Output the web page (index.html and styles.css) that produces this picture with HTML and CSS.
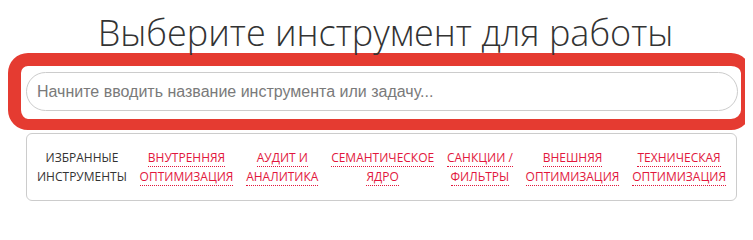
FILE: index.html
```html
<!DOCTYPE html>
<html lang="ru">
<head>
<meta charset="utf-8">
<link rel="stylesheet" href="styles.css">
</head>
<body>
<div class="page">
  <h1 class="title">Выберите инструмент для работы</h1>
  <div class="highlight">
    <div class="search"><span class="placeholder">Начните вводить название инструмента или задачу...</span></div>
  </div>
  <div class="tabs">
    <div class="tab tab-fav">Избранные<br>инструменты</div>
    <div class="tab"><span class="link">Внутренняя</span><br><span class="link">оптимизация</span></div>
    <div class="tab"><span class="link">Аудит и</span><br><span class="link">аналитика</span></div>
    <div class="tab"><span class="link">Семантическое</span><br><span class="link">ядро</span></div>
    <div class="tab"><span class="link">Санкции /</span><br><span class="link">фильтры</span></div>
    <div class="tab"><span class="link">Внешняя</span><br><span class="link">оптимизация</span></div>
    <div class="tab"><span class="link">Техническая</span><br><span class="link">оптимизация</span></div>
  </div>
</div>
</body>
</html>
```

FILE: styles.css
```css
html, body {
  background: #fff;
}
body {
  margin: 8px;
}
.page {
  margin-left: 18px;
  width: 712px;
  padding-top: 2px;
}
.title {
  margin: 0;
  font-family: "Open Sans", sans-serif;
  font-weight: 300;
  font-size: 36px;
  line-height: 45px;
  color: #333;
  text-align: center;
  padding-left: 7px;
}
.highlight {
  margin: -2px -13px 0 -18px;
  border-style: solid;
  border-color: #e53b31;
  border-width: 13px 10px 11px 13px;
  border-radius: 20px;
  padding: 6px 3px 8px 5px;
  background: #fff;
}
.search {
  box-sizing: border-box;
  height: 39px;
  border: 1px solid #ccc;
  border-radius: 20px;
  padding-left: 10px;
  display: flex;
  align-items: center;
}
.placeholder {
  font-family: "Liberation Sans", Arial, sans-serif;
  font-size: 16px;
  color: #7a7a7a;
}
.tabs {
  margin-top: 3px;
  box-sizing: border-box;
  width: 711px;
  border: 1px solid #ccc;
  border-radius: 6px;
  padding: 14px 10px;
  display: flex;
  justify-content: space-between;
}
.tab {
  font-family: "Open Sans", sans-serif;
  font-size: 12px;
  line-height: 19px;
  text-transform: uppercase;
  text-align: center;
  color: #e2173d;
}
.tab-fav {
  color: #333;
}
.link {
  border-bottom: 1px dotted #e2173d;
}
```
